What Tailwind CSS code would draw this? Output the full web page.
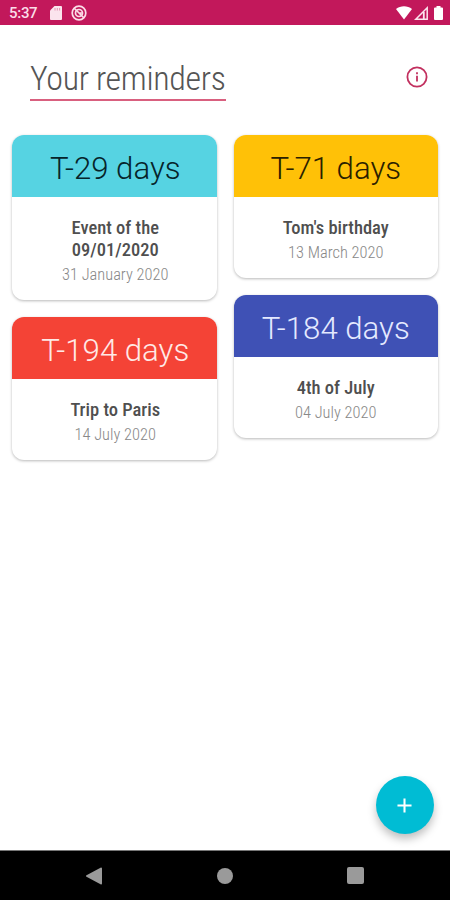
<!DOCTYPE html>
<html lang="en">
<head>
  <meta charset="UTF-8" />
  <meta name="viewport" content="width=device-width, initial-scale=1.0" />
  <title>Your reminders</title>
  <script src="https://cdn.jsdelivr.net/npm/@tailwindcss/browser@4"></script>
</head>
<body class="bg-white font-['Roboto',sans-serif]">
  <div class="relative flex h-[900px] w-[450px] flex-col overflow-hidden">
    <!-- Status bar -->
    <div class="flex h-[25px] shrink-0 items-center bg-[#c2185b] pl-[9px] pr-[7px] text-white">
      <span class="w-[41px] pt-[2px] text-[15px] leading-[25px] font-medium tracking-[-0.3px] text-[#fbdde8]">5:37</span>
      <svg class="h-[14px] w-3" viewBox="0 0 12 14" fill="#fbe4ed"><path d="M4.5 0H11a1 1 0 0 1 1 1v12a1 1 0 0 1-1 1H1a1 1 0 0 1-1-1V4.5z" /><path d="M5 2v2.5M7.3 2v2.5M9.6 2v2.5" stroke="#c2185b" stroke-opacity=".5" stroke-width=".8" /></svg>
      <svg class="ml-[9px] h-4 w-4" viewBox="0 0 16 16" fill="none" stroke="#fbdde8" stroke-width="1.7"><circle cx="8" cy="8" r="6.8" /><circle cx="8" cy="8" r="3.5" /><path d="M3 3l10 10M8 8h4" /></svg>
      <svg class="ml-auto h-[14px] w-4" viewBox="0 0 16 14" fill="#fff"><path d="M0 3C4.5-.8 11.5-.8 16 3L8 13.5z" /></svg>
      <svg class="ml-[2px] h-[14px] w-[14px]" viewBox="0 0 14 14" fill="none" stroke="#fbe4ed" stroke-width="1.5"><path d="M13.2 1.8v11.4H1.8z" /><path d="M9.8 6v7" stroke-width="1.8" /></svg>
      <svg class="ml-[6px] h-[14px] w-[9px]" viewBox="0 0 9 14" fill="#fff"><path d="M2.5 0h4v1.5H8a1 1 0 0 1 1 1V13a1 1 0 0 1-1 1H1a1 1 0 0 1-1-1V2.5a1 1 0 0 1 1-1h1.5z" /></svg>
    </div>

    <!-- Title -->
    <header class="flex h-[110px] shrink-0 items-start justify-between pt-[33px] pr-[22px] pl-[30px]">
      <h1 class="h-[43px] w-[196px] border-b-2 border-[#d9607f] text-[34px] leading-10 font-light font-stretch-condensed tracking-[-0.35px] whitespace-nowrap text-[#555]">Your reminders</h1>
      <svg class="mt-[8px] h-[22px] w-[22px]" viewBox="0 0 22 22" fill="none" stroke="#c2305f" stroke-width="1.8"><circle cx="11" cy="11" r="9.6" /><path d="M11 9.8v5.7M11 6.2v2" /></svg>
    </header>

    <!-- Reminders -->
    <main class="flex items-start gap-[17px] px-3">
      <div class="flex w-[205px] flex-col gap-[17px]">
        <article class="h-[165px] overflow-hidden rounded-xl bg-white text-center shadow-[0_1px_3px_rgba(0,0,0,0.28)]">
          <div class="h-[62px] bg-[#56d3e2] pl-[2px] text-[31.2px] leading-[68px] font-light text-[#06242a]">T-29 days</div>
          <h2 class="mt-5 pl-[2px] text-[18.5px] leading-[22px] font-medium font-stretch-condensed text-[#4f4f4f]">Event of the<br />09/01/2020</h2>
          <p class="pl-[2px] text-[16.4px] leading-[27px] font-light font-stretch-condensed text-[#888]">31 January 2020</p>
        </article>
        <article class="h-[143px] overflow-hidden rounded-xl bg-white text-center shadow-[0_1px_3px_rgba(0,0,0,0.28)]">
          <div class="h-[62px] bg-[#f44336] pl-[2px] text-[31.2px] leading-[68px] font-light text-[#ffe9e6]">T-194 days</div>
          <h2 class="mt-5 pl-[2px] text-[18.5px] leading-[22px] font-medium font-stretch-condensed text-[#4f4f4f]">Trip to Paris</h2>
          <p class="pl-[2px] text-[16.4px] leading-[27px] font-light font-stretch-condensed text-[#888]">14 July 2020</p>
        </article>
      </div>
      <div class="flex w-[205px] flex-col gap-[17px]">
        <article class="h-[143px] overflow-hidden rounded-xl bg-white text-center shadow-[0_1px_3px_rgba(0,0,0,0.28)]">
          <div class="h-[62px] bg-[#ffc107] text-[31.2px] leading-[68px] font-light text-[#2a2000]">T-71 days</div>
          <h2 class="mt-5 text-[18.5px] leading-[22px] font-medium font-stretch-condensed text-[#4f4f4f]">Tom's birthday</h2>
          <p class="text-[16.4px] leading-[27px] font-light font-stretch-condensed text-[#888]">13 March 2020</p>
        </article>
        <article class="h-[143px] overflow-hidden rounded-xl bg-white text-center shadow-[0_1px_3px_rgba(0,0,0,0.28)]">
          <div class="h-[62px] bg-[#3f51b5] text-[31.2px] leading-[68px] font-light text-[#e4e9ff]">T-184 days</div>
          <h2 class="mt-5 text-[18.5px] leading-[22px] font-medium font-stretch-condensed text-[#4f4f4f]">4th of July</h2>
          <p class="text-[16.4px] leading-[27px] font-light font-stretch-condensed text-[#888]">04 July 2020</p>
        </article>
      </div>
    </main>

    <!-- Add button -->
    <button class="absolute right-4 bottom-[66px] flex h-[58px] w-[58px] items-center justify-center rounded-full bg-[#00bcd4] pr-px shadow-[0_5px_9px_rgba(0,0,0,0.25)]">
      <svg class="h-[15px] w-[15px]" viewBox="0 0 16 16" stroke="#fff" stroke-width="2.2"><path d="M8 .5v15M.5 8h15" /></svg>
    </button>

    <!-- Navigation bar -->
    <nav class="mt-auto flex h-[50px] shrink-0 items-center justify-between border-t border-[#777] bg-black pr-[86px] pl-[86px]">
      <svg class="h-[18px] w-4" viewBox="0 0 16 18" fill="#9a9a9a"><path d="M15 .5a1 1 0 0 1 1 1v15a1 1 0 0 1-1.5.8L.5 9.8a1 1 0 0 1 0-1.6L14.5.7z" /></svg>
      <span class="h-4 w-4 rounded-full bg-[#9a9a9a]"></span>
      <span class="h-[17px] w-[17px] rounded-[2px] bg-[#9a9a9a]"></span>
    </nav>
  </div>
</body>
</html>
